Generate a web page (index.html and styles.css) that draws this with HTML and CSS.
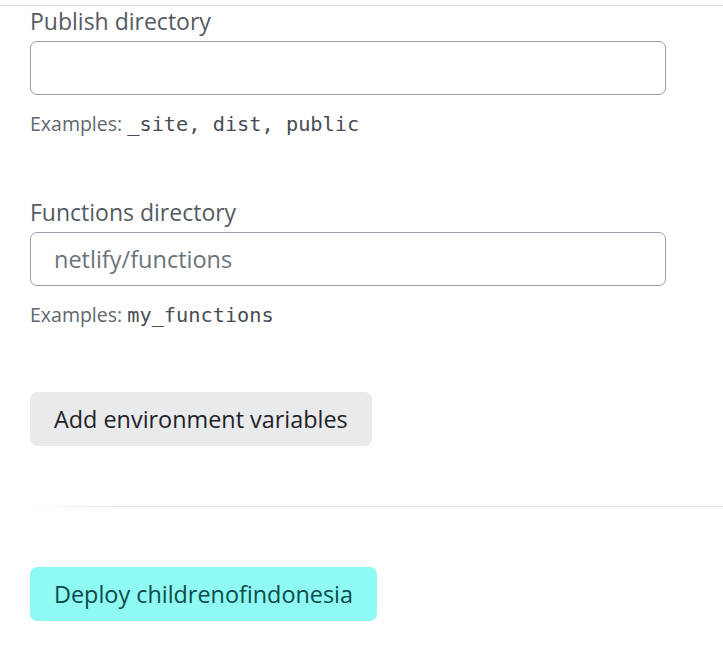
FILE: index.html
```html
<!DOCTYPE html>
<html>
<head>
<meta charset="utf-8">
<link rel="stylesheet" href="styles.css">
</head>
<body>
<div class="page">
  <div class="topline"></div>
  <div class="field">
    <label class="label">Publish directory</label>
    <input class="input" type="text">
    <p class="hint">Examples: <span class="mono">_site, dist, public</span></p>
  </div>
  <div class="field field-2">
    <label class="label">Functions directory</label>
    <input class="input" type="text" placeholder="netlify/functions">
    <p class="hint">Examples: <span class="mono">my_functions</span></p>
  </div>
  <button class="btn btn-secondary">Add environment variables</button>
  <div class="divider"></div>
  <button class="btn btn-primary">Deploy childrenofindonesia</button>
</div>
</body>
</html>
```
FILE: styles.css
```css
* { box-sizing: border-box; }
html, body { margin: 0; padding: 0; background: #fff; }
body { font-family: "Open Sans", "Noto Sans", sans-serif; overflow: hidden; }
.page { display: flex; flex-direction: column; align-items: flex-start; }
.topline { height: 1px; width: 100%; background: #dcdcdc; margin-top: 5px; }
.field { display: flex; flex-direction: column; align-items: flex-start; padding-left: 30px; width: 100%; }
.label { font-size: 23px; font-weight: 500; line-height: 30px; color: #545a61; }
.input {
  width: 636px; height: 54px; margin-top: 5px;
  border: 1px solid #9aa1a8; border-radius: 7px;
  font: inherit; font-size: 23.5px; font-weight: 500; padding: 0 23px; color: #333;
  outline: none;
}
.input::placeholder { color: #6b737b; }
.hint { margin: 16px 0 0; font-size: 19.5px; line-height: 26px; color: #60676e; }
.mono { font-family: "DejaVu Sans Mono", monospace; font-size: 20.3px; color: #474d54; }
.field-2 { margin-top: 60px; }
.btn {
  border: 0; border-radius: 7px; font: inherit; font-size: 23.4px; font-weight: 500;
  height: 54px; padding: 0 24px; margin-left: 30px; cursor: pointer;
}
.btn-secondary { background: #e9eaec; color: #1f2328; margin-top: 64px; }
.divider {
  height: 1px; width: calc(100% - 30px); margin-left: 30px; margin-top: 60px;
  background: linear-gradient(to right, rgba(230,230,230,0), #e6e6e6 80px);
}
.btn-primary { background: #8ffaf4; color: #0b4b4a; margin-top: 60px; }
```
